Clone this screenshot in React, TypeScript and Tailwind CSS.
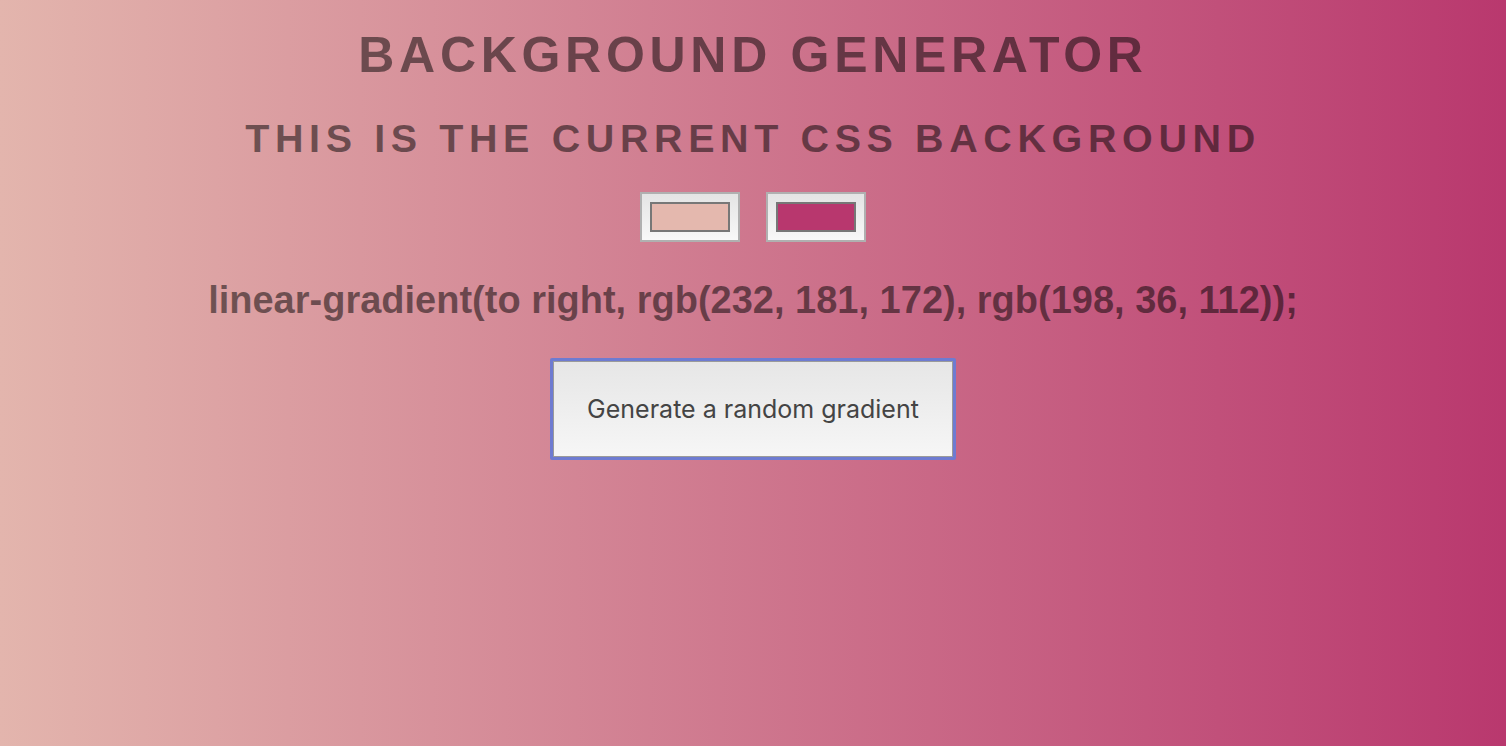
export default function App() {
    const swatches = ["#e4b8ae", "#b8376e"];
    return (
        <div className="flex h-[746px] w-full flex-col items-center bg-[linear-gradient(to_right,#e3b5ad,#b9386e)] font-['Liberation_Sans',Arial,sans-serif] text-black/50">
            <h1 className="mt-[30px] text-[50px] leading-none font-bold tracking-[4.7px] uppercase">
                Background Generator
            </h1>
            <h3 className="mt-[39px] text-[39.5px] leading-none font-bold tracking-[5.6px] uppercase">
                This is the current CSS background
            </h3>

            <div className="mt-[33px] flex gap-[26px]">
                {swatches.map((color) => (
                    <div
                        key={color}
                        className="flex h-[50px] w-[100px] items-center justify-center border-2 border-[#b0b0b0] bg-[linear-gradient(to_bottom,#e4e4e4,#f8f8f8)]"
                    >
                        <div className="h-[30px] w-[80px] border-2 border-[#777]" style={{ backgroundColor: color }} />
                    </div>
                ))}
            </div>

            <h3 className="mt-[39px] text-[38px] leading-none font-bold">
                linear-gradient(to right, rgb(232, 181, 172), rgb(198, 36, 112));
            </h3>

            <button className="mt-[39px] flex h-[102px] w-[406px] items-center justify-center rounded-[2px] border-[3px] border-[#6e7bd1] bg-[linear-gradient(to_bottom,#e6e6e6,#f6f6f6)] pt-[2px] font-['Inter',sans-serif] text-[25px] text-[#444] outline outline-1 -outline-offset-4 outline-[#9a9a9a]">
                Generate a random gradient
            </button>
        </div>
    );
}
